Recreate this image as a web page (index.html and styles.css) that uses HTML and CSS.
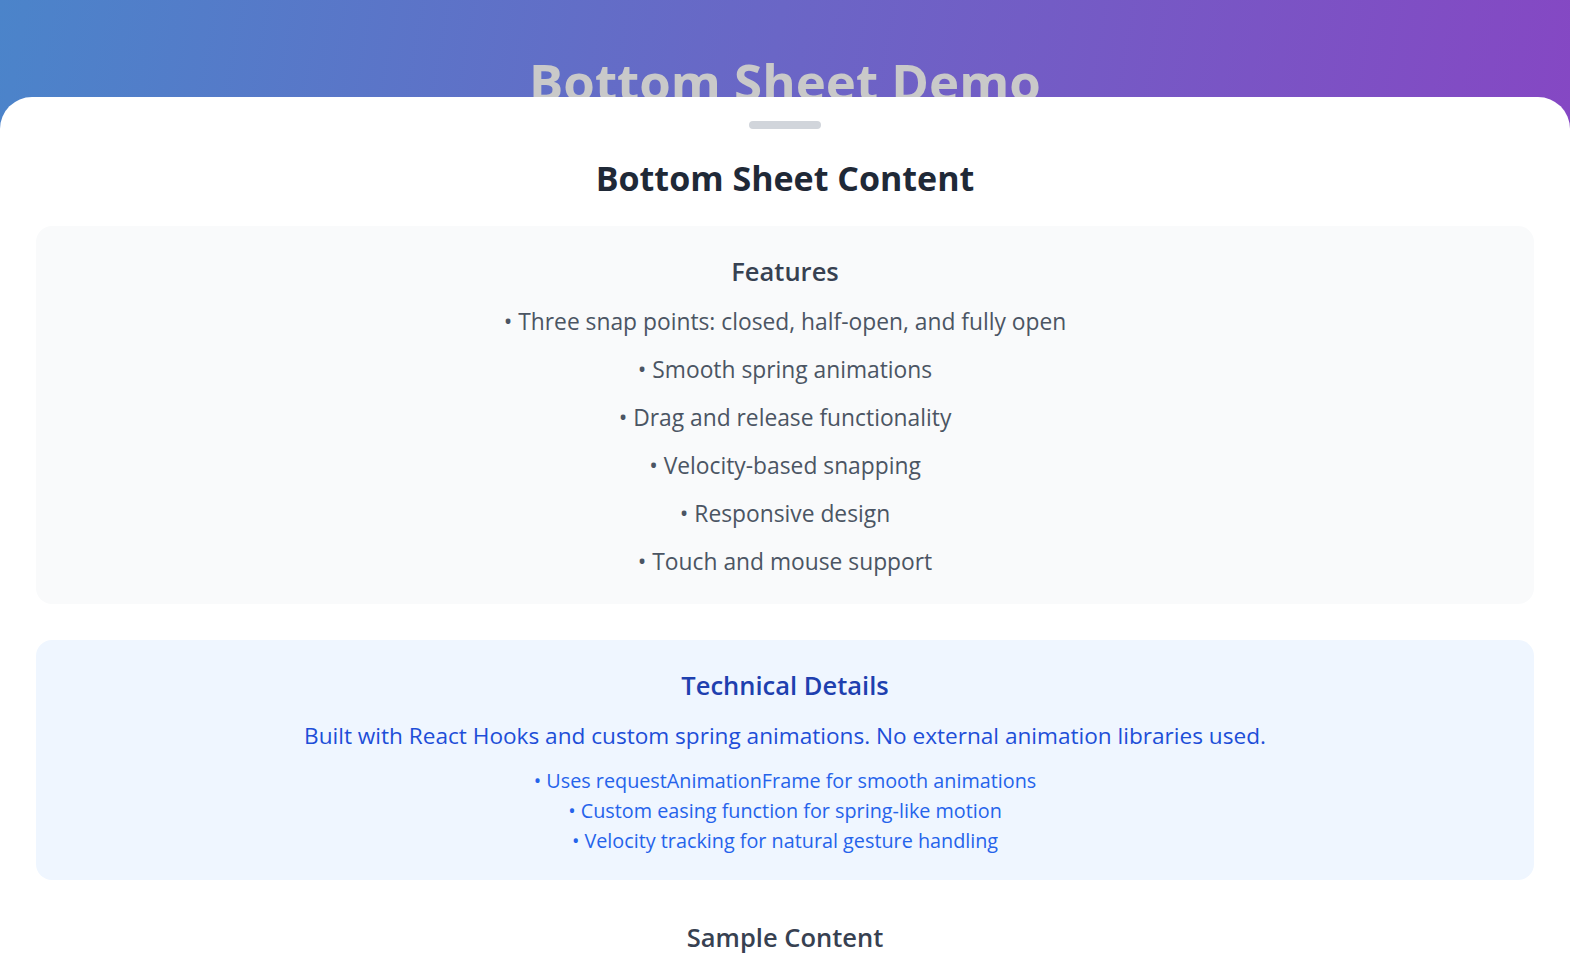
FILE: index.html
```html
<!DOCTYPE html>
<html lang="en">
<head>
<meta charset="utf-8">
<title>Bottom Sheet Demo</title>
<link rel="stylesheet" href="styles.css">
</head>
<body>
<div class="page">
  <header class="hero">
    <h1 class="hero-title">Bottom Sheet Demo</h1>
  </header>
  <section class="sheet">
    <div class="handle"></div>
    <h2 class="sheet-title">Bottom Sheet Content</h2>
    <div class="card card-gray">
      <h3 class="card-title">Features</h3>
      <ul class="feature-list">
        <li>• Three snap points: closed, half-open, and fully open</li>
        <li>• Smooth spring animations</li>
        <li>• Drag and release functionality</li>
        <li>• Velocity-based snapping</li>
        <li>• Responsive design</li>
        <li>• Touch and mouse support</li>
      </ul>
    </div>
    <div class="card card-blue">
      <h3 class="card-title blue-title">Technical Details</h3>
      <p class="tech-desc">Built with React Hooks and custom spring animations. No external animation libraries used.</p>
      <ul class="tech-list">
        <li>• Uses requestAnimationFrame for smooth animations</li>
        <li>• Custom easing function for spring-like motion</li>
        <li>• Velocity tracking for natural gesture handling</li>
      </ul>
    </div>
    <div class="sample">
      <h3 class="card-title">Sample Content</h3>
    </div>
  </section>
</div>
</body>
</html>
```
FILE: styles.css
```css
* { box-sizing: border-box; }
html, body { margin: 0; padding: 0; }
body {
  font-family: "Open Sans", "Noto Sans", sans-serif;
  width: 1570px;
  height: 970px;
  overflow: hidden;
}
.page {
  position: relative;
  width: 1570px;
  height: 970px;
  background: linear-gradient(100deg, #4b84ca 0%, #6a66c6 45%, #8a42c3 100%);
  overflow: hidden;
}
.hero {
  padding-top: 51px;
  text-align: center;
}
.hero-title {
  margin: 0;
  font-size: 51px;
  line-height: 60px;
  font-weight: 700;
  color: #c9c9c9;
}
.sheet {
  position: absolute;
  left: 0;
  right: 0;
  top: 97px;
  bottom: 0;
  background: #ffffff;
  border-radius: 32px 32px 0 0;
  padding: 24px 36px 0;
  overflow: hidden;
  text-align: center;
}
.handle {
  width: 72px;
  height: 8px;
  border-radius: 4px;
  background: #d1d5db;
  margin: 0 auto 25px;
}
.sheet-title {
  margin: 0 0 24px;
  font-size: 34px;
  line-height: 48px;
  font-weight: 700;
  color: #1f2937;
}
.card {
  border-radius: 16px;
  padding: 24px;
  margin-bottom: 36px;
}
.card-gray { background: #f9fafb; }
.card-blue { background: #eff6ff; }
.card-title {
  margin: 0 0 12px;
  font-size: 25.5px;
  line-height: 42px;
  font-weight: 600;
  color: #374151;
}
.blue-title { color: #1e40af; }
.feature-list {
  list-style: none;
  margin: 0;
  padding: 0;
  display: flex;
  flex-direction: column;
  gap: 12px;
  font-size: 22.8px;
  line-height: 36px;
  color: #4b5563;
}
.tech-desc {
  margin: 0 0 12px;
  font-size: 22.6px;
  line-height: 36px;
  color: #1d4ed8;
}
.tech-list {
  list-style: none;
  margin: 0;
  padding: 0;
  font-size: 19.8px;
  line-height: 30px;
  color: #2563eb;
}
.sample { padding: 0; }
```
